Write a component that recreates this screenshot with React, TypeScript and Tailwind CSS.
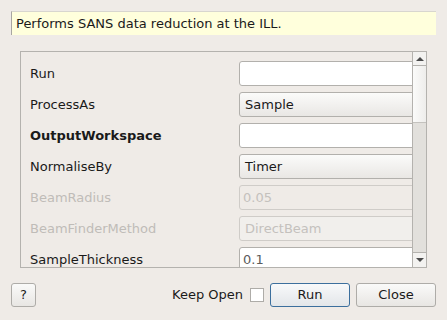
const rows = [
  { label: "Run", kind: "input", value: "" },
  { label: "ProcessAs", kind: "combo", value: "Sample" },
  { label: "OutputWorkspace", kind: "input", value: "", bold: true },
  { label: "NormaliseBy", kind: "combo", value: "Timer" },
  { label: "BeamRadius", kind: "input", value: "0.05", disabled: true },
  { label: "BeamFinderMethod", kind: "combo", value: "DirectBeam", disabled: true },
  { label: "SampleThickness", kind: "input", value: "0.1", grey: true },
];

export default function App() {
  return (
    <div
      className="w-[447px] h-[320px] bg-[#efebe7] flex flex-col text-[13px] text-[#1a1a1a] overflow-hidden"
      style={{ fontFamily: '"DejaVu Sans", sans-serif' }}
    >
      {/* description */}
      <div className="mx-[11px] mt-[11px] h-[24px] bg-[#ffffdc] border-l border-t border-[#a8a6a2] border-t-[#d8d6cf] flex items-center pl-[4px]">
        Performs SANS data reduction at the ILL.
      </div>

      {/* property list */}
      <div className="ml-[20px] mr-[20px] mt-[16px] h-[217px] border border-[#b4b2ae] flex">
        <div className="flex-1 min-w-0 overflow-hidden flex flex-col gap-[6px] pt-[9px]">
          {rows.map((r) => (
            <div key={r.label} className="flex items-center h-[25px] shrink-0">
              <div
                className={
                  "w-[218px] shrink-0 pl-[9px] " +
                  (r.bold ? "font-bold " : "") +
                  (r.disabled ? "text-[#bfbcb8]" : "")
                }
              >
                {r.label}
              </div>
              <div
                className={
                  "w-[200px] shrink-0 h-[25px] rounded-[3px] border flex items-center " +
                  (r.kind === "combo" ? "pl-[5px] " : "pl-[3px] ") +
                  (r.disabled
                    ? "border-[#cfccc8] text-[#c4c1bd] "
                    : r.grey
                      ? "border-[#b2b0ac] text-[#5c5c5c] "
                      : "border-[#b2b0ac] ") +
                  (r.kind === "combo"
                    ? r.disabled
                      ? "bg-[#f1efec]"
                      : "bg-gradient-to-b from-[#fbfbfa] to-[#e9e7e4]"
                    : r.disabled
                      ? "bg-[#efebe7]"
                      : "bg-white")
                }
              >
                {r.value}
              </div>
            </div>
          ))}
        </div>

        {/* scrollbar */}
        <div className="w-[14px] shrink-0 border-l border-[#b4b2ae] flex flex-col bg-[#e2e0dc]">
          <div className="h-[14px] bg-[#f3f2f0] border-b border-[#b4b2ae] flex items-center justify-center">
            <div className="w-0 h-0 border-l-[4px] border-r-[4px] border-b-[4px] border-l-transparent border-r-transparent border-b-[#4a4a4a]" />
          </div>
          <div className="h-[57px] bg-gradient-to-r from-[#fbfbfa] to-[#eeedeb] border-b border-[#c4c2be]" />
          <div className="flex-1" />
          <div className="h-[15px] bg-[#f3f2f0] border-t border-[#b4b2ae] flex items-center justify-center">
            <div className="w-0 h-0 border-l-[4px] border-r-[4px] border-t-[4px] border-l-transparent border-r-transparent border-t-[#4a4a4a]" />
          </div>
        </div>
      </div>

      {/* buttons */}
      <div className="mt-[15px] mx-[11px] flex items-center h-[24px]">
        <button className="w-[25px] h-[24px] rounded-[3px] border border-[#aeaca8] bg-gradient-to-b from-[#fafaf9] to-[#e8e6e3]">
          ?
        </button>
        <div className="flex-1" />
        <span className="mr-[7px]">Keep Open</span>
        <div className="w-[14px] h-[14px] bg-white border border-[#aeaca8] mr-[6px]" />
        <button className="w-[80px] h-[24px] rounded-[3px] border border-[#3c6f9d] bg-gradient-to-b from-[#f8f9fa] to-[#e3e6e9]">
          Run
        </button>
        <button className="ml-[6px] w-[80px] h-[24px] rounded-[3px] border border-[#aeaca8] bg-gradient-to-b from-[#fafaf9] to-[#e8e6e3]">
          Close
        </button>
      </div>
    </div>
  );
}
